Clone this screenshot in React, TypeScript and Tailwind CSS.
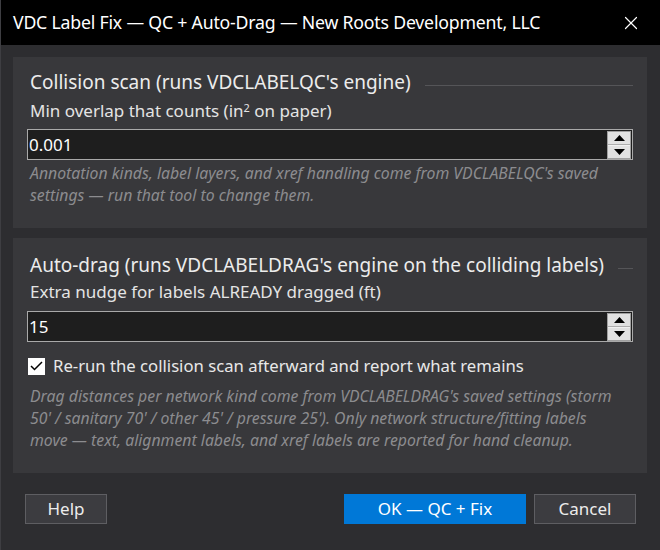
import { X } from 'lucide-react';

function Spinner() {
    return (
        <div className="flex flex-col w-[24px] h-[28px] bg-[#f0f0f0] border border-[#a0a0a0] gap-px">
            <div className="flex-1 flex items-center justify-center bg-[#e1e1e1] border-b border-[#adadad]">
                <svg width="11" height="6" viewBox="0 0 11 6"><path d="M5.5 0 L11 6 L0 6 Z" fill="#000" /></svg>
            </div>
            <div className="flex-1 flex items-center justify-center bg-[#e1e1e1]">
                <svg width="11" height="6" viewBox="0 0 11 6"><path d="M0 0 L11 0 L5.5 6 Z" fill="#000" /></svg>
            </div>
        </div>
    );
}

function NumberBox({ value }: { value: string }) {
    return (
        <div className="flex items-center h-[31px] bg-[#1e1e1e] border border-[#a9a9a9] pl-[1px] pr-[1px]">
            <span className="flex-1 text-[17px] text-white leading-none">{value}</span>
            <Spinner />
        </div>
    );
}

function GroupTitle({ children }: { children: string }) {
    return (
        <div className="flex items-center gap-[14px] h-[26px]">
            <span className="text-[19px] text-[#ececec] whitespace-nowrap">{children}</span>
            <div className="flex-1 h-px bg-[#555558] mt-[6px]" />
        </div>
    );
}

export default function App() {
    return (
        <div className="w-[660px] h-[550px] bg-[#2d2d30] flex flex-col border-l border-[#3e3e42]" style={{ fontFamily: '"Noto Sans", "Open Sans", sans-serif' }}>
            <div className="h-[45px] bg-black flex items-center justify-between pl-[12px] pr-[18px] flex-shrink-0">
                <span className="text-[17.7px] text-white tracking-[-0.2px]">VDC Label Fix — QC + Auto-Drag — New Roots Development, LLC</span>
                <X size={22} strokeWidth={1.3} className="text-white" />
            </div>

            <div className="flex flex-col pl-[12px] pr-[13px] pt-[12px]">
                <section className="bg-[#38383b] h-[171px] pl-[14px] pr-[14px] pt-[12px]">
                    <div className="pl-[3px]">
                        <GroupTitle>Collision scan (runs VDCLABELQC's engine)</GroupTitle>
                    </div>
                    <p className="text-[17px] text-[#e4e4e4] pl-[3px] mt-[5px] leading-[22px]">
                        Min overlap that counts (in<sup className="text-[11px]">2</sup> on paper)
                    </p>
                    <div className="mt-[7px]">
                        <NumberBox value="0.001" />
                    </div>
                    <p className="text-[15.8px] italic text-[#8c8c8f] pl-[3px] mt-[2px] leading-[22px] whitespace-nowrap">
                        Annotation kinds, label layers, and xref handling come from VDCLABELQC's saved<br />
                        settings — run that tool to change them.
                    </p>
                </section>

                <section className="bg-[#38383b] h-[235px] mt-[10px] pl-[14px] pr-[14px] pt-[14px]">
                    <div className="pl-[3px]">
                        <GroupTitle>Auto-drag (runs VDCLABELDRAG's engine on the colliding labels)</GroupTitle>
                    </div>
                    <p className="text-[17px] text-[#e4e4e4] pl-[3px] mt-[3px] leading-[22px]">
                        Extra nudge for labels ALREADY dragged (ft)
                    </p>
                    <div className="mt-[8px]">
                        <NumberBox value="15" />
                    </div>
                    <label className="flex items-center gap-[8px] mt-[13px] pl-[1px] h-[22px]">
                        <span className="w-[17px] h-[17px] bg-white flex items-center justify-center flex-shrink-0">
                            <svg width="13" height="10" viewBox="0 0 13 10"><path d="M1 5 L4.5 8.5 L12 1" fill="none" stroke="#000" strokeWidth="1.5" /></svg>
                        </span>
                        <span className="text-[16.7px] text-[#e8e8e8]">Re-run the collision scan afterward and report what remains</span>
                    </label>
                    <p className="text-[15.8px] italic text-[#8c8c8f] pl-[3px] mt-[8px] leading-[22px] whitespace-nowrap">
                        Drag distances per network kind come from VDCLABELDRAG's saved settings (storm<br />
                        50' / sanitary 70' / other 45' / pressure 25'). Only network structure/fitting labels<br />
                        move — text, alignment labels, and xref labels are reported for hand cleanup.
                    </p>
                </section>
            </div>

            <div className="flex items-center pl-[24px] pr-[24px] mt-[21px]">
                <button className="w-[82px] h-[30px] bg-[#3c3c40] border border-[#5e5e62] text-[17px] text-[#ececec]">Help</button>
                <div className="flex-1" />
                <button className="w-[182px] h-[30px] bg-[#0078d7] text-[17px] text-white">OK — QC + Fix</button>
                <button className="w-[102px] h-[30px] ml-[8px] bg-[#3c3c40] border border-[#5e5e62] text-[17px] text-[#ececec]">Cancel</button>
            </div>
        </div>
    );
}
